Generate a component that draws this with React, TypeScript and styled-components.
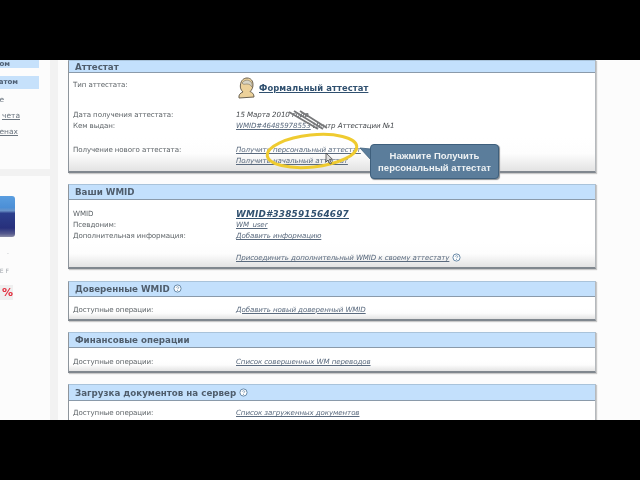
import React from "react";
import styled, { createGlobalStyle } from "styled-components";

const Global = createGlobalStyle`
  html, body { margin: 0; padding: 0; background: #000; }
  * { box-sizing: border-box; }
`;
const Screen = styled.div`
  position: relative; width: 640px; height: 480px; background: #000; overflow: hidden;
  display: flex; flex-direction: column; font-family: "DejaVu Sans", Verdana, sans-serif;
`;
const Letterbox = styled.div`height: 60px; flex: none; background: #000;`;
const Video = styled.div`
  position: relative; height: 360px; flex: none; background: #fff; overflow: hidden;
  display: grid; grid-template-columns: 50px 8px 1fr; filter: blur(0.4px);
`;
const Sidebar = styled.aside`
  display: flex; flex-direction: column; background: #fcfcfc; overflow: hidden;
`;
const Gutter = styled.div`background: #f2f2f2;`;
const SideTab = styled.div<{ $h: number; $mb: number; $pr: number }>`
  width: 39px; height: ${(p) => p.$h}px; margin-bottom: ${(p) => p.$mb}px; padding-right: ${(p) => p.$pr}px; background: #c6e1fb;
  font-size: 7px; font-weight: 700; color: #4d5f74; line-height: ${(p) => p.$h}px;
  display: flex; justify-content: flex-end; white-space: nowrap;
`;
const SideLink = styled.div<{ $u?: boolean; $pr: number }>`
  width: 39px; height: 16px; padding-right: ${(p) => p.$pr}px; font-size: 7.5px; line-height: 16px; color: #6c7680; display: flex;
  justify-content: flex-end; white-space: nowrap; text-decoration: ${(p) => (p.$u ? "underline" : "none")};
`;
const SideBreak = styled.div`
  height: 56px; flex: none;
  background: linear-gradient(#fcfcfc 52%, #f2f2f2 52%, #f2f2f2 64%, #fcfcfc 64%);
`;
const Banner = styled.div`
  width: 15px; height: 41px; border-radius: 0 3px 3px 0; flex: none;
  background: linear-gradient(#5a9ee0 0%, #4c8fd6 28%, #6b94c8 36%, #2c3f8c 42%, #27307c 78%, #565a8e 92%, #8b8da8 100%);
`;
const TinyText = styled.div<{ $mt: number }>`
  margin-top: ${(p) => p.$mt}px; font-size: 6px; line-height: 8px; color: #a3a8ae; letter-spacing: 2px;
  width: 11px; white-space: nowrap; display: flex; justify-content: flex-end;
`;
const Promo = styled.div`
  margin-top: 10px; width: 13px; height: 15px; background: #efefef; color: #e33040; font-size: 11px; font-weight: 700;
  line-height: 15px; display: flex; justify-content: flex-end; flex: none;
`;
const Main = styled.main`
  background: #fcfcfc; padding: 0 44px 0 10px; display: flex; flex-direction: column; gap: 11.5px; overflow: hidden;
`;
const Card = styled.section<{ $h: number }>`
  flex: none; height: ${(p) => p.$h}px; border: 1px solid #8e959c; border-top-color: #a9c3da;
  border-bottom: 2px solid #80878e; background: linear-gradient(#fff 70%, #fdfdfd 84%, #e3e3e3 100%);
  box-shadow: 1px 1px 1px #c9c9c9; display: flex; flex-direction: column;
  border-right-color: #b5b9bd;
`;
const CardHead = styled.header<{ $h: number }>`
  flex: none; height: ${(p) => p.$h}px; background: #c3e0fc; border-bottom: 1px solid #8a9aaa;
  padding-left: 6px; display: flex; align-items: center; gap: 3px;
  font-size: 8.7px; font-weight: 700; color: #4f5d6c; white-space: nowrap;
`;
const CardBody = styled.div<{ $pt: number }>`
  padding: ${(p) => p.$pt}px 0 0 4px; display: flex; flex-direction: column;
`;
const Row = styled.div<{ $h?: number; $mb?: number }>`
  display: grid; grid-template-columns: 163px 1fr; height: ${(p) => p.$h ?? 11}px; margin-bottom: ${(p) => p.$mb ?? 0}px;
  align-items: center; white-space: nowrap;
`;
const Label = styled.span`font-size: 7.1px; color: #5e6468; letter-spacing: -.1px;`;
const TopLabel = styled(Label)`align-self: start; margin-top: 1px;`;
const Value = styled.span`font-size: 7.1px; font-style: italic; color: #45494d; letter-spacing: -.1px;`;
const Link = styled.span`font-size: 7.1px; font-style: italic; color: #5a6a7e; text-decoration: underline; letter-spacing: -.1px;`;
const BigLink = styled.span`
  font-size: 8.9px; font-weight: 700; font-style: italic; color: #30506f; text-decoration: underline; letter-spacing: .2px;
`;
const FormalCell = styled.div`display: flex; align-items: center; gap: 4px; align-self: start; margin: -2px 0 0 2px;`;
const FormalLink = styled(BigLink)`font-size: 8.4px; font-style: normal; letter-spacing: .1px;`;
const InlineCell = styled.span`display: inline-flex; align-items: center; gap: 3px;`;
const Tooltip = styled.div`
  position: absolute; left: 370px; top: 84px; width: 129px; height: 35px; border-radius: 4px;
  background: #5b7d9b; border: 1px solid #3e5f7c; box-shadow: 1px 1px 1px #8a8f94; color: #eef2f4;
  font-family: "Liberation Sans", Arial, sans-serif; font-weight: 700; font-size: 9.5px; line-height: 12px;
  text-align: center; padding-top: 5px; white-space: nowrap;
`;
const Overlay = styled.svg`position: absolute; left: 0; top: 0; pointer-events: none;`;

function Help() {
  return (
    <svg width="9" height="9" viewBox="0 0 9 9">
      <circle cx="4.5" cy="4.5" r="3.6" fill="#fff" stroke="#6a8ba8" strokeWidth="1" />
      <path d="M3.3 3.6c.2-1.2 2.4-1.2 2.4.1 0 .9-1.2.8-1.2 1.6" fill="none" stroke="#6a8ba8" strokeWidth=".8" />
      <circle cx="4.5" cy="6.6" r=".5" fill="#6a8ba8" />
    </svg>
  );
}
function Bust() {
  return (
    <svg width="17" height="22" viewBox="0 0 17 22">
      <path d="M1 21c-.5-3 1-5 4-6-2-2-3-4-2.600-7C3 3 6 1 9 1c4 0 6 3 6 6.500 0 3-1 5.500-3 7 2 1 4 2 4 5.500z" fill="#ecd19a" stroke="#6b6252" strokeWidth="1" />
      <path d="M4 6c2-3 6-4 9-1 1 1 1.500 3 1 5-1-2-3-3-5-3S5 8 4 6z" fill="#d8d4c4" stroke="#77715f" strokeWidth=".6" />
    </svg>
  );
}

export default function App() {
  return (
    <Screen>
      <Global />
      <Letterbox />
      <Video>
        <Sidebar>
          <SideTab $h={8} $mb={8} $pr={29}>ом</SideTab>
          <SideTab $h={13} $mb={3} $pr={21}>атом</SideTab>
          <SideLink $pr={35}>е</SideLink>
          <SideLink $u $pr={19}>чета</SideLink>
          <SideLink $u $pr={21}>енах</SideLink>
          <SideBreak />
          <Banner />
          <TinyText $mt={11}>.</TinyText>
          <TinyText $mt={11}>EF</TinyText>
          <Promo>%</Promo>
        </Sidebar>
        <Gutter />
        <Main>
          <Card $h={112.5}>
            <CardHead $h={12}>Аттестат</CardHead>
            <CardBody $pt={6}>
              <Row $h={29} $mb={1}>
                <TopLabel>Тип аттестата:</TopLabel>
                <FormalCell><Bust /><FormalLink>Формальный аттестат</FormalLink></FormalCell>
              </Row>
              <Row><Label>Дата получения аттестата:</Label><Value>15 Марта 2010 года</Value></Row>
              <Row $mb={13}><Label>Кем выдан:</Label><Value><Link>WMID#46485978553</Link> Центр Аттестации №1</Value></Row>
              <Row><Label>Получение нового аттестата:</Label><Link>Получить персональный аттестат</Link></Row>
              <Row><span /><Link>Получить начальный аттестат</Link></Row>
            </CardBody>
          </Card>
          <Card $h={85}>
            <CardHead $h={15}>Ваши WMID</CardHead>
            <CardBody $pt={8}>
              <Row><Label>WMID</Label><BigLink>WMID#338591564697</BigLink></Row>
              <Row><Label>Псевдоним:</Label><Link>WM_user</Link></Row>
              <Row $mb={11}><Label>Дополнительная информация:</Label><Link>Добавить информацию</Link></Row>
              <Row><span /><InlineCell><Link>Присоединить дополнительный WMID к своему аттестату</Link><Help /></InlineCell></Row>
            </CardBody>
          </Card>
          <Card $h={40}>
            <CardHead $h={15}>Доверенные WMID <Help /></CardHead>
            <CardBody $pt={7}><Row><Label>Доступные операции:</Label><Link>Добавить новый доверенный WMID</Link></Row></CardBody>
          </Card>
          <Card $h={40.500}>
            <CardHead $h={15}>Финансовые операции</CardHead>
            <CardBody $pt={8}><Row><Label>Доступные операции:</Label><Link>Список совершенных WM переводов</Link></Row></CardBody>
          </Card>
          <Card $h={60}>
            <CardHead $h={16}>Загрузка документов на сервер <Help /></CardHead>
            <CardBody $pt={6}><Row><Label>Доступные операции:</Label><Link>Список загруженных документов</Link></Row></CardBody>
          </Card>
        </Main>
        <Overlay width="640" height="360" viewBox="0 0 640 360">
          <ellipse cx="312" cy="91" rx="45" ry="16" transform="rotate(-6 312 91)" fill="none" stroke="#efcb30" strokeWidth="3" />
          <path d="M289 52l29 17M294 51l29 18M300 51l27 17" stroke="#77787a" strokeWidth="1.800" fill="none" />
          <path d="M326 93l0 9 2-2 2 4 1.500-.7-2-4 3 0z" fill="#ddd" stroke="#333" strokeWidth=".7" />
          <path d="M360 88l11 1v11z" fill="#5b7d9b" stroke="#3e5f7c" strokeWidth=".8" />
        </Overlay>
        <Tooltip>Нажмите Получить<br />персональный аттестат</Tooltip>
      </Video>
      <Letterbox />
    </Screen>
  );
}
